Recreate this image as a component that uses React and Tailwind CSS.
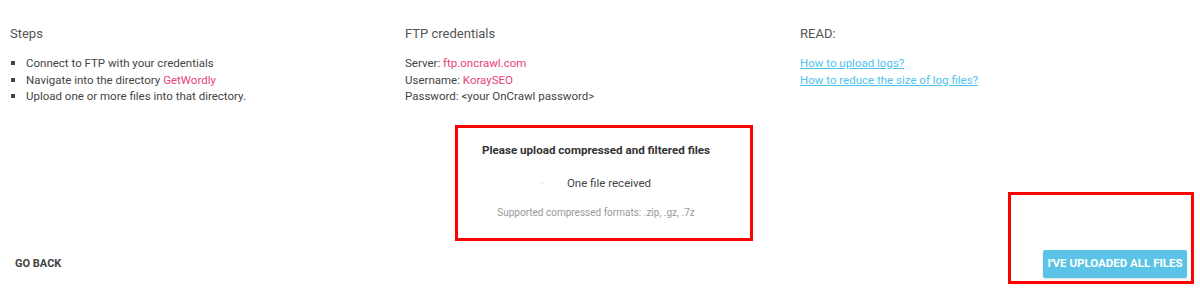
const pink = 'text-[#e8437a]';

const Bullet = ({ children }) => (
  <li className="flex items-center">
    <span className="w-[4px] h-[4px] bg-[#444] ml-[1px] mr-[11px]" />
    <span>{children}</span>
  </li>
);

export default function App() {
  return (
    <div className="relative w-[1200px] h-[289px] bg-white font-['Roboto',sans-serif] text-[11.5px] text-[#444] overflow-hidden">
      {/* Columns */}
      <div className="flex h-[125px] pt-[26px] pl-[10px]">
        <div className="w-[395px]">
          <h3 className="text-[13px] leading-[16px] text-[#555]">Steps</h3>
          <ul className="mt-[13px] leading-[16.5px]">
            <Bullet>Connect to FTP with your credentials</Bullet>
            <Bullet>
              Navigate into the directory <span className={pink}>GetWordly</span>
            </Bullet>
            <Bullet>Upload one or more files into that directory.</Bullet>
          </ul>
        </div>

        <div className="w-[395px]">
          <h3 className="text-[13px] leading-[16px] text-[#555]">FTP credentials</h3>
          <div className="mt-[13px] leading-[16.5px]">
            <p>
              Server: <span className={pink}>ftp.oncrawl.com</span>
            </p>
            <p>
              Username: <span className={pink}>KoraySEO</span>
            </p>
            <p>Password: &lt;your OnCrawl password&gt;</p>
          </div>
        </div>

        <div className="w-[395px]">
          <h3 className="text-[13px] leading-[16px] text-[#555]">READ:</h3>
          <div className="mt-[13px] leading-[16.5px] flex flex-col items-start">
            <a className="text-[#4fc3ec] underline">How to upload logs?</a>
            <a className="text-[#4fc3ec] underline">How to reduce the size of log files?</a>
          </div>
        </div>
      </div>

      {/* Upload zone */}
      <div className="ml-[455px] w-[298px] h-[116px] border-[3px] border-[#ff0000] pt-[14px] pr-[16px] text-center">
        <p className="font-bold text-[11.6px] leading-[16px] text-[#333]">
          Please upload compressed and filtered files
        </p>
        <div className="mt-[17px] flex items-center justify-center leading-[16px]">
          <span className="w-[2px] h-[2px] rounded-full bg-[#d8eef6] mr-[24px]" />
          <span>One file received</span>
        </div>
        <p className="mt-[15px] text-[10px] leading-[14px] text-[#999]">
          Supported compressed formats: .zip, .gz, .7z
        </p>
      </div>

      {/* Footer actions */}
      <div className="mt-[9px] h-[28px] flex items-center justify-between pl-[15px] pr-[13px]">
        <button className="font-bold text-[11px] text-[#444] uppercase">Go back</button>
        <button className="w-[144px] h-[28px] rounded-[2px] bg-[#5bc4e6] text-white font-bold text-[11.5px] uppercase shadow-[0_1px_2px_rgba(0,0,0,0.15)]">
          I&apos;ve uploaded all files
        </button>
      </div>

      {/* annotation */}
      <div className="absolute left-[1008px] top-[192px] w-[186px] h-[92px] border-[3px] border-[#ff0000] pointer-events-none" />
    </div>
  );
}
